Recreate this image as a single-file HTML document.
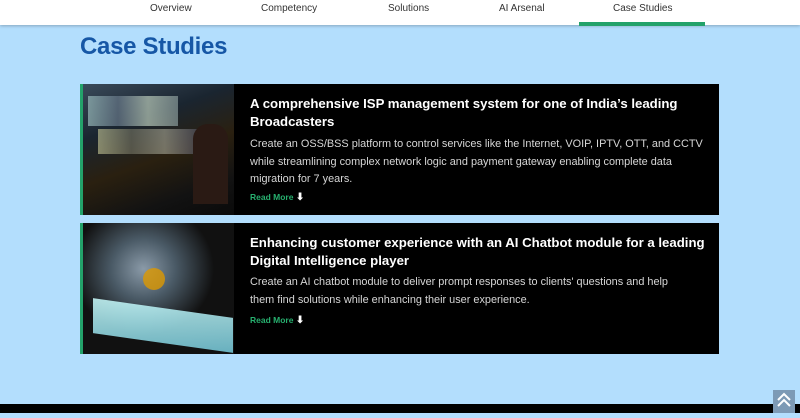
<!DOCTYPE html>
<html><head><style>
*{margin:0;padding:0;box-sizing:border-box}
body{width:800px;height:413px;overflow:hidden;background:#b3defd;font-family:"Liberation Sans",sans-serif;position:relative}
.nav{position:absolute;left:0;top:0;width:800px;height:25px;background:#fff;box-shadow:0 1px 3px rgba(0,0,0,.25)}
.nav span{position:absolute;top:3px;font-size:10px;color:#333}
.ul{position:absolute;left:579px;top:22px;width:126px;height:4px;background:#23a26a}
h1{position:absolute;left:80px;top:33px;font-size:24px;color:#1657a6;font-weight:bold;letter-spacing:-.3px}
.card{position:absolute;left:80px;width:639px;height:131px;background:#000;border-left:3px solid #23a26a}
.img{position:absolute;left:0;top:0;width:151px;height:100%;overflow:hidden}
.t{position:absolute;left:167px;top:11px;width:470px;color:#fff;font-weight:bold;font-size:13.2px;line-height:18px}
.d{position:absolute;left:167px;width:458px;color:#d6d6d6;font-size:10.9px;line-height:17.5px}
.r{position:absolute;left:167px;color:#27b06f;font-size:8.5px;font-weight:bold}
.r b{color:#fff;font-size:10px}
</style></head><body>
<div class="nav">
<span style="left:150px">Overview</span>
<span style="left:261px">Competency</span>
<span style="left:388px">Solutions</span>
<span style="left:499px">AI Arsenal</span>
<span style="left:613px">Case Studies</span>
</div>
<div class="ul"></div>
<h1>Case Studies</h1>
<div class="card" style="top:84px">
<div class="img" style="background:linear-gradient(160deg,#3a4a5a 0%,#1a2530 30%,#2a2010 55%,#121212 80%,#0a0a0a 100%)">
<div style="position:absolute;left:5px;top:12px;width:90px;height:30px;background:linear-gradient(90deg,#9bb,#678,#bcb,#899);opacity:.7"></div>
<div style="position:absolute;left:15px;top:45px;width:100px;height:25px;background:linear-gradient(90deg,#cc9,#776,#aa9,#556);opacity:.6"></div>
<div style="position:absolute;left:110px;top:40px;width:35px;height:80px;background:#2a1a14;border-radius:15px 15px 0 0"></div>
</div>
<div class="t">A comprehensive ISP management system for one of India’s leading Broadcasters</div>
<div class="d" style="top:52px">Create an OSS/BSS platform to control services like the Internet, VOIP, IPTV, OTT, and CCTV while streamlining complex network logic and payment gateway enabling complete data migration for 7 years.</div>
<div class="r" style="top:108px">Read More <b>⬇</b></div>
</div>
<div class="card" style="top:223px">
<div class="img" style="background:radial-gradient(ellipse at 40% 35%,#8a9aa8 0%,#4a5a66 25%,#111 55%),#000">
<div style="position:absolute;left:10px;top:85px;width:140px;height:35px;background:linear-gradient(170deg,#cff,#7cd);transform:skewY(8deg);opacity:.85"></div>
<div style="position:absolute;left:60px;top:45px;width:22px;height:22px;border-radius:50%;background:#d90;opacity:.8"></div>
</div>
<div class="t">Enhancing customer experience with an AI Chatbot module for a leading Digital Intelligence player</div>
<div class="d" style="top:51px;width:445px">Create an AI chatbot module to deliver prompt responses to clients' questions and help them find solutions while enhancing their user experience.</div>
<div class="r" style="top:92px">Read More <b>⬇</b></div>
</div>
<div style="position:absolute;left:0;top:404px;width:800px;height:9px;background:#000"></div>
<div style="position:absolute;left:773px;top:390px;width:22px;height:23px;background:#7d9ab5">
<svg width="22" height="23" viewBox="0 0 22 23"><path d="M5 10 L11 4 L17 10 M5 16 L11 10 L17 16" stroke="#fff" stroke-width="2" fill="none"/></svg>
</div>
</body></html>
